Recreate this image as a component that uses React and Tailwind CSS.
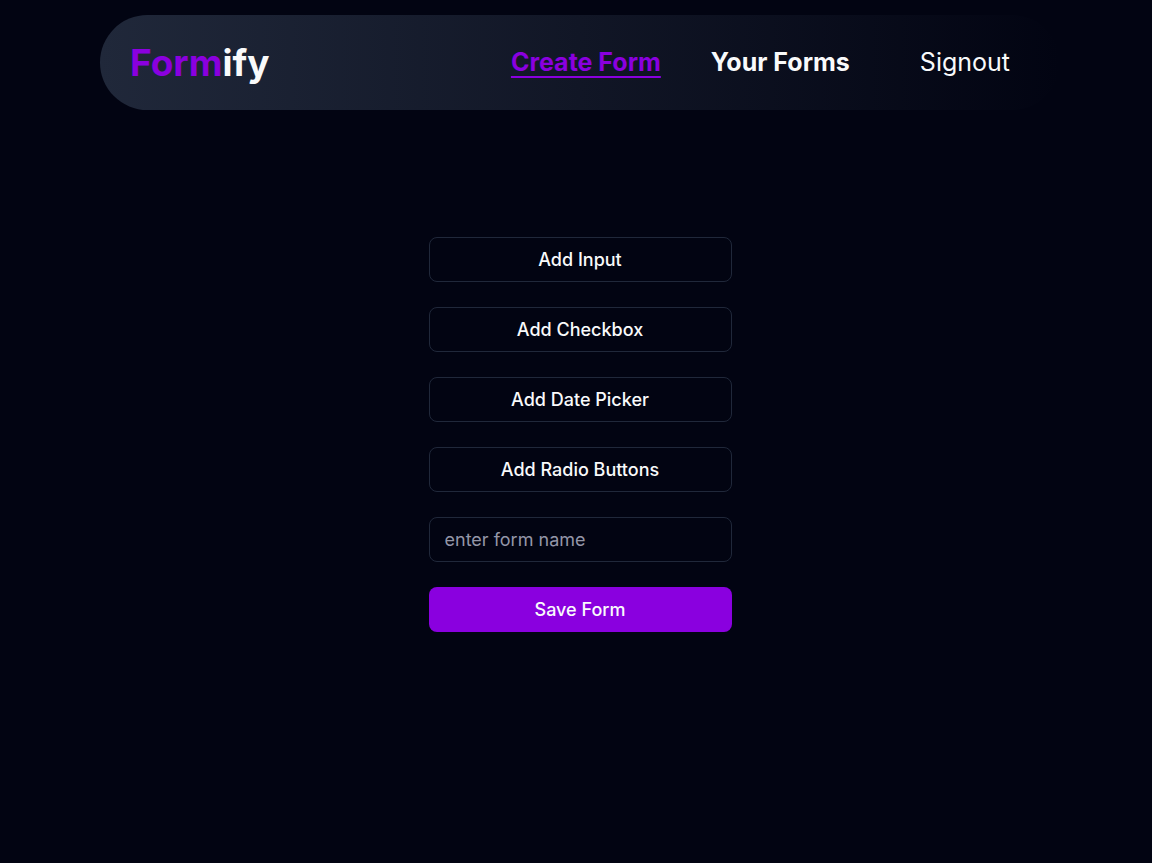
const fieldTypes = ["Add Input", "Add Checkbox", "Add Date Picker", "Add Radio Buttons"];

export default function App() {
  return (
    <div className="min-h-screen bg-[#020412] pt-[15px] pr-[92px] pl-[100px] font-['Inter',sans-serif] text-gray-50">
      <header className="flex items-center justify-between rounded-full bg-linear-to-r/srgb from-[#20283a] to-[#020412] px-[30px] py-5">
        <a href="#home" className="text-[37px] leading-[55px] font-bold text-gray-50">
          <span className="text-[#8a00df]">Form</span>ify
        </a>
        <nav className="flex items-center gap-[50px] text-[25px] leading-[35px]">
          <a href="#create" className="font-bold text-[#8a00df] underline decoration-2 underline-offset-5">Create Form</a>
          <a href="#forms" className="font-bold text-gray-50">Your Forms</a>
          <button type="button" className="px-5 font-normal">Signout</button>
        </nav>
      </header>
      <main className="mx-auto mt-[127px] flex w-[303px] flex-col gap-[25px] text-[18px] leading-[25px]">
        {fieldTypes.map((label) => (
          <button key={label} type="button" className="h-[45px] rounded-lg border border-[#20283a] font-medium">
            {label}
          </button>
        ))}
        <input
          type="text"
          aria-label="Form name"
          placeholder="enter form name"
          className="h-[45px] rounded-lg border border-[#20283a] px-[15px] placeholder:text-[#9496a8]"
        />
        <button type="button" className="h-[45px] rounded-lg bg-[#8a00df] font-medium">Save Form</button>
      </main>
    </div>
  );
}
